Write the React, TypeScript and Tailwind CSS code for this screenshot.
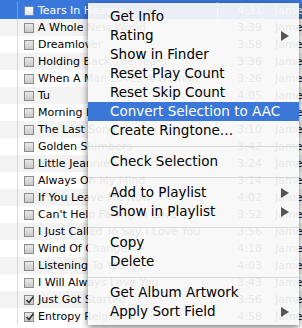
import React from "react";

const songs: { name: string; time: string; checked?: boolean }[] = [
  { name: "Tears In Heaven", time: "4:31" },
  { name: "A Whole New World", time: "3:39" },
  { name: "Dreamlover", time: "3:58" },
  { name: "Holding Back The Years", time: "3:36" },
  { name: "When A Man Loves A Woman", time: "3:26" },
  { name: "Tu", time: "4:05" },
  { name: "Morning Dance", time: "3:50" },
  { name: "The Last Song", time: "3:10" },
  { name: "Golden Slumbers", time: "3:42" },
  { name: "Little Jeannie", time: "3:24" },
  { name: "Always On My Mind", time: "3:14" },
  { name: "If You Leave Me Now", time: "4:02" },
  { name: "Can't Help Falling In Love", time: "3:52" },
  { name: "I Just Called To Say I Love You", time: "3:56" },
  { name: "Wind Of Change", time: "4:18" },
  { name: "Listening To You", time: "4:03" },
  { name: "I Will Always Love You", time: "3:43" },
  { name: "Just Got Started", time: "3:56", checked: true },
  { name: "Entropy Reigns", time: "4:58", checked: true },
];

type Item = { label?: string; sub?: boolean; active?: boolean; sep?: boolean };

const menu: Item[] = [
  { label: "Get Info" },
  { label: "Rating", sub: true },
  { label: "Show in Finder" },
  { label: "Reset Play Count" },
  { label: "Reset Skip Count" },
  { label: "Convert Selection to AAC", active: true },
  { label: "Create Ringtone…" },
  { sep: true },
  { label: "Check Selection" },
  { sep: true },
  { label: "Add to Playlist", sub: true },
  { label: "Show in Playlist", sub: true },
  { sep: true },
  { label: "Copy" },
  { label: "Delete" },
  { sep: true },
  { label: "Get Album Artwork" },
  { label: "Apply Sort Field", sub: true },
];

function Checkbox({ checked, selected }: { checked?: boolean; selected?: boolean }) {
  return (
    <div
      className={
        "relative w-[10px] h-[10px] border shrink-0 " +
        (selected
          ? "border-[#6d8ec4] bg-gradient-to-b from-[#ffffff] to-[#dfe4ec]"
          : "border-[#8c8c8c] bg-gradient-to-b from-[#e9e9e9] to-[#c9c9c9]")
      }
    >
      {checked && (
        <svg className="absolute left-[0px] top-[-1px]" width="10" height="10" viewBox="0 0 10 10">
          <path d="M1.5 5 L4 7.5 L8.5 1.5" fill="none" stroke="#333" strokeWidth="1.6" />
        </svg>
      )}
    </div>
  );
}

export default function App() {
  return (
    <div
      className="relative w-[302px] h-[328px] overflow-hidden bg-white"
      style={{ fontFamily: '"DejaVu Sans", "Liberation Sans", sans-serif' }}
    >
      <div className="flex flex-col">
        {songs.map((s, i) => {
          const sel = i === 0;
          const bg = sel ? "bg-[#3b78dc]" : i % 2 === 1 ? "bg-[#f3f3f3]" : "bg-white";
          return (
            <div
              key={i}
              className={
                "flex items-center text-[11px] leading-none " +
                bg +
                (sel ? " h-[19px] pt-[2px] text-white" : " h-[17px] text-black")
              }
            >
              <div
                className={
                  "w-[18px] h-full shrink-0 border-r " +
                  (sel ? "border-[#6b9be6]" : "border-[#d9d9d9]")
                }
              />
              <div className="w-[200px] shrink-0 flex items-center pl-[6px] gap-[4px] overflow-hidden whitespace-nowrap h-full border-r border-[#e6e6e6]">
                <Checkbox checked={s.checked} selected={sel} />
                <span>{s.name}</span>
              </div>
              <div className="w-[50px] shrink-0 text-right pr-[6px]">{s.time}</div>
              <div className="pl-[7px] whitespace-nowrap">James Last</div>
            </div>
          );
        })}
      </div>

      <div className="absolute left-[88px] top-[3px] w-[211px] bg-[rgba(248,248,248,0.93)] py-[4px] shadow-[0_2px_7px_rgba(0,0,0,0.55)] text-[13.5px] leading-none">
        {menu.map((m, i) =>
          m.sep ? (
            <div key={i} className="h-[12px] flex items-center">
              <div className="w-full h-px bg-[#d7d7d7]" />
            </div>
          ) : (
            <div
              key={i}
              className={
                "h-[19px] flex items-center justify-between pl-[22px] pr-[10px] whitespace-nowrap " +
                (m.active ? "bg-[#3a77d9] text-white" : "text-black")
              }
            >
              <span>{m.label}</span>
              {m.sub && (
                <svg width="8" height="10" viewBox="0 0 8 10">
                  <path d="M0 0 L8 5 L0 10 Z" fill="#555" />
                </svg>
              )}
            </div>
          )
        )}
      </div>
    </div>
  );
}
